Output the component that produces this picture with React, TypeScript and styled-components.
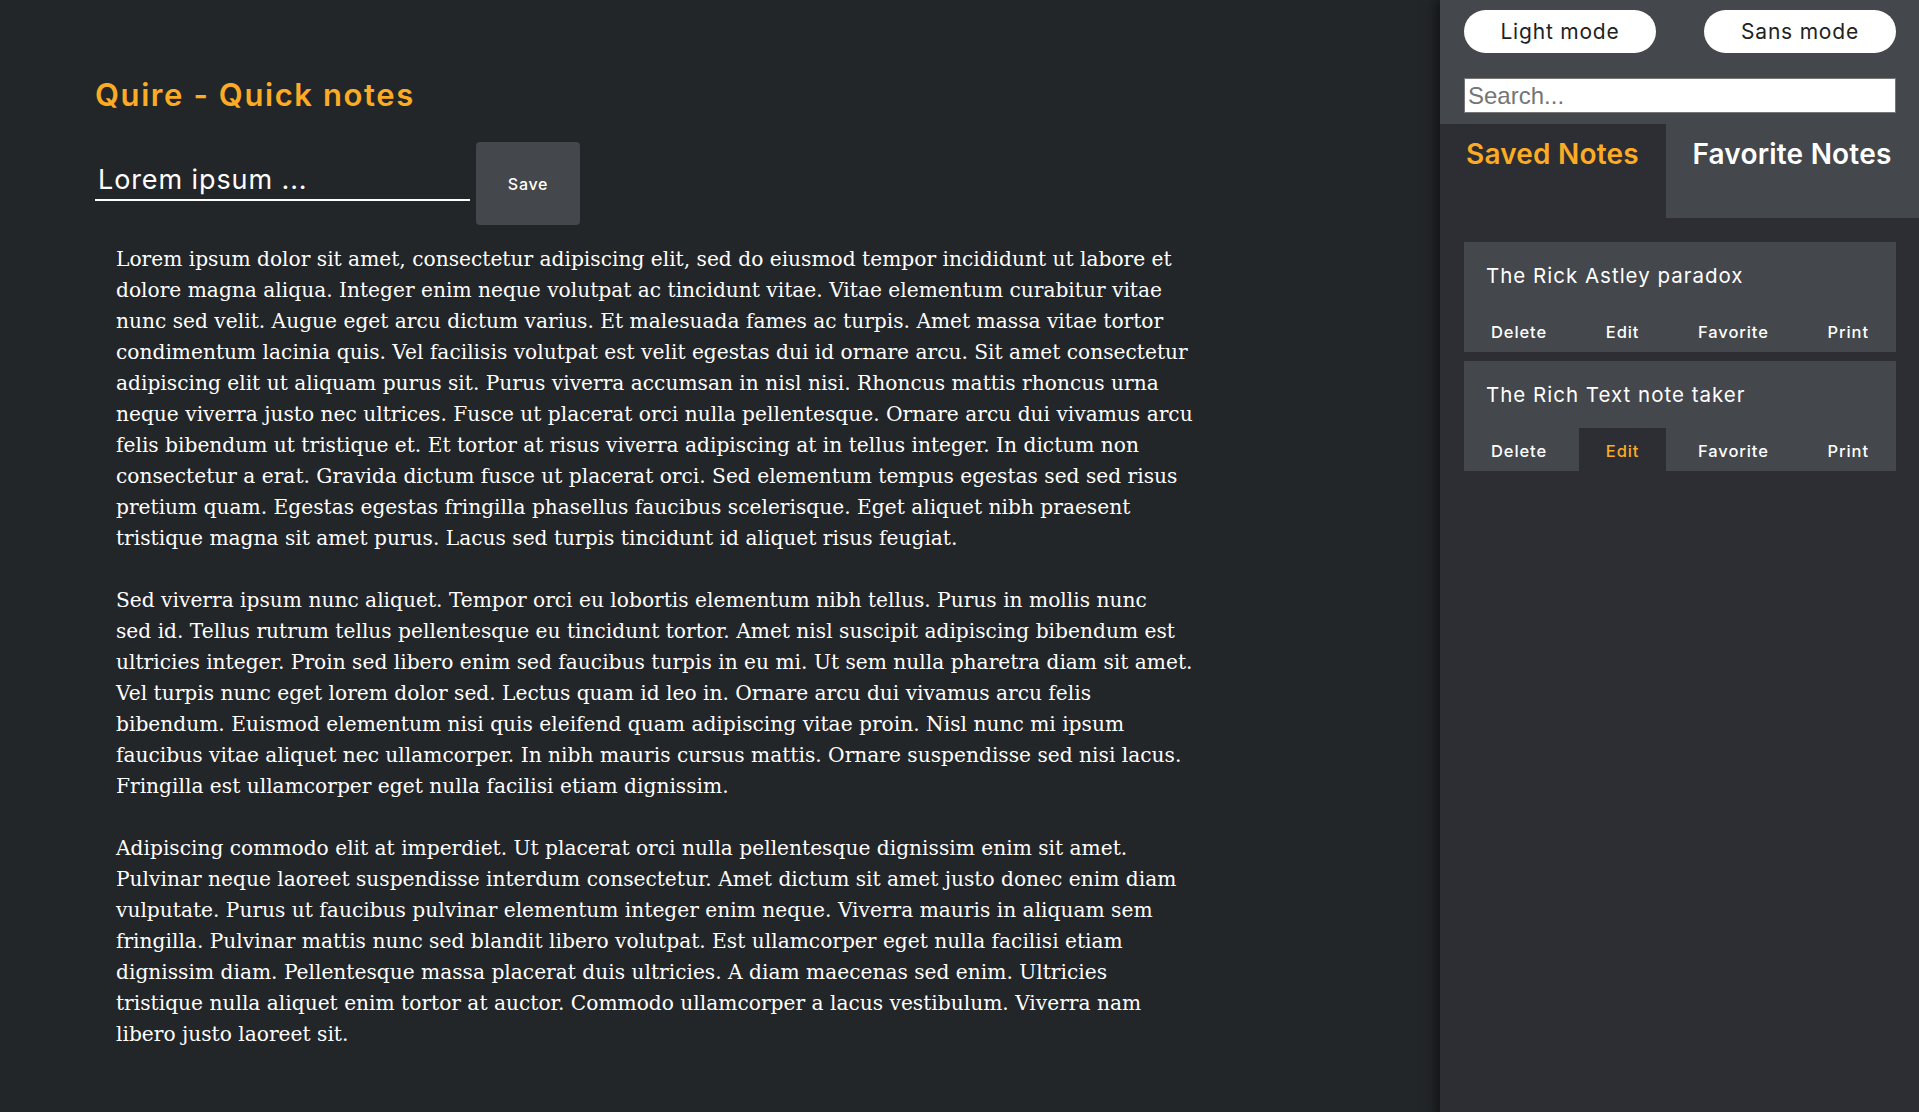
import React from "react";
import styled, { createGlobalStyle } from "styled-components";

const GlobalStyle = createGlobalStyle`
  html, body { margin: 0; padding: 0; background: #232629; }
  body { font-family: Inter, "Open Sans", sans-serif; }
  * { box-sizing: border-box; }
`;

const ORANGE = "#fbab24";
const LIGHT = "#44474c";
const DARK = "#2c2e33";

const Page = styled.div`
  display: flex;
  min-height: 1112px;
  background: #232629;
`;

const Main = styled.main`
  flex: 1;
  padding: 75px 0 40px 95px;
  color: #fff;
`;

const Title = styled.h1`
  margin: 0;
  font-family: Inter, sans-serif;
  font-weight: 600;
  font-size: 31px;
  letter-spacing: 1.6px;
  line-height: 40px;
  color: ${ORANGE};
`;

const Composer = styled.form`
  display: flex;
  align-items: flex-start;
  margin-top: 27px;
`;

const TitleInput = styled.input`
  width: 375px;
  height: 41px;
  margin-top: 18px;
  padding: 0 3px;
  background: transparent;
  border: none;
  border-bottom: 2px solid #fff;
  color: #fff;
  font-family: Inter, sans-serif;
  font-size: 27px;
  letter-spacing: 0.9px;
  outline: none;
  &::placeholder { color: #fff; }
`;

const SaveButton = styled.button`
  margin-left: 6px;
  width: 104px;
  height: 83px;
  border: none;
  border-radius: 4px;
  background: ${LIGHT};
  color: #fff;
  font-family: Inter, sans-serif;
  font-size: 16px;
  letter-spacing: 0.7px;
  font-weight: 500;
`;

const Body = styled.article`
  margin-top: 19px;
  padding-left: 21px;
  font-family: "DejaVu Serif", serif;
  font-size: 20.2px;
  line-height: 31px;
  color: #fff;
`;

const Para = styled.p`
  margin: 0 0 31px;
  white-space: pre;
`;

const Sidebar = styled.aside`
  width: 479px;
  flex: none;
  background: ${DARK};
  box-shadow: -4px 0 12px rgba(0, 0, 0, 0.55);
  position: relative;
  z-index: 1;
`;

const Header = styled.div`
  background: ${LIGHT};
  padding-top: 10px;
`;

const Controls = styled.div`
  padding: 0 23px 0 24px;
`;

const ModeRow = styled.div`
  display: flex;
  justify-content: space-between;
`;

const ModeButton = styled.button`
  width: 192px;
  height: 43px;
  border: none;
  border-radius: 22px;
  background: #fff;
  color: #222;
  font-family: Inter, sans-serif;
  font-size: 21px;
  letter-spacing: 0.8px;
`;

const Search = styled.input`
  display: block;
  margin-top: 25px;
  width: 100%;
  height: 35px;
  padding: 0 3px;
  border: 1px solid #767676;
  background: #fff;
  font-family: "Liberation Sans", Arial, sans-serif;
  font-size: 24px;
  outline: none;
  &::placeholder { color: #757575; }
`;

const TabBar = styled.div`
  display: flex;
  margin-top: 11px;
  height: 94px;
`;

const Tab = styled.button<{ $active?: boolean }>`
  flex: 1 1 auto;
  padding: 12px 26px 0;
  border: none;
  text-align: left;
  align-self: stretch;
  display: flex;
  align-items: flex-start;
  background: ${(p) => (p.$active ? DARK : "transparent")};
  color: ${(p) => (p.$active ? ORANGE : "#fff")};
  font-family: Inter, sans-serif;
  font-weight: 600;
  font-size: 28px;
  letter-spacing: 0.2px;
  line-height: 36px;
  white-space: nowrap;
`;

const NoteList = styled.div`
  display: flex;
  flex-direction: column;
  gap: 9px;
  padding: 24px 23px 0 24px;
`;

const Card = styled.div`
  height: 110px;
  display: flex;
  flex-direction: column;
  background: ${LIGHT};
`;

const CardTitle = styled.div`
  padding: 22px 22px 0;
  font-family: Inter, sans-serif;
  font-size: 20.5px;
  line-height: 24px;
  color: #fff;
  letter-spacing: 1px;
`;

const Actions = styled.div`
  margin-top: auto;
  display: flex;
  justify-content: space-between;
  height: 43px;
`;

const Action = styled.button<{ $active?: boolean }>`
  padding: 2px 27px 0;
  border: none;
  background: ${(p) => (p.$active ? DARK : "transparent")};
  color: ${(p) => (p.$active ? ORANGE : "#fff")};
  font-family: Inter, sans-serif;
  font-size: 16.5px;
  letter-spacing: 0.9px;
  font-weight: 500;
`;

const paragraphs = [
  [
    "Lorem ipsum dolor sit amet, consectetur adipiscing elit, sed do eiusmod tempor incididunt ut labore et",
    "dolore magna aliqua. Integer enim neque volutpat ac tincidunt vitae. Vitae elementum curabitur vitae",
    "nunc sed velit. Augue eget arcu dictum varius. Et malesuada fames ac turpis. Amet massa vitae tortor",
    "condimentum lacinia quis. Vel facilisis volutpat est velit egestas dui id ornare arcu. Sit amet consectetur",
    "adipiscing elit ut aliquam purus sit. Purus viverra accumsan in nisl nisi. Rhoncus mattis rhoncus urna",
    "neque viverra justo nec ultrices. Fusce ut placerat orci nulla pellentesque. Ornare arcu dui vivamus arcu",
    "felis bibendum ut tristique et. Et tortor at risus viverra adipiscing at in tellus integer. In dictum non",
    "consectetur a erat. Gravida dictum fusce ut placerat orci. Sed elementum tempus egestas sed sed risus",
    "pretium quam. Egestas egestas fringilla phasellus faucibus scelerisque. Eget aliquet nibh praesent",
    "tristique magna sit amet purus. Lacus sed turpis tincidunt id aliquet risus feugiat.",
  ],
  [
    "Sed viverra ipsum nunc aliquet. Tempor orci eu lobortis elementum nibh tellus. Purus in mollis nunc",
    "sed id. Tellus rutrum tellus pellentesque eu tincidunt tortor. Amet nisl suscipit adipiscing bibendum est",
    "ultricies integer. Proin sed libero enim sed faucibus turpis in eu mi. Ut sem nulla pharetra diam sit amet.",
    "Vel turpis nunc eget lorem dolor sed. Lectus quam id leo in. Ornare arcu dui vivamus arcu felis",
    "bibendum. Euismod elementum nisi quis eleifend quam adipiscing vitae proin. Nisl nunc mi ipsum",
    "faucibus vitae aliquet nec ullamcorper. In nibh mauris cursus mattis. Ornare suspendisse sed nisi lacus.",
    "Fringilla est ullamcorper eget nulla facilisi etiam dignissim.",
  ],
  [
    "Adipiscing commodo elit at imperdiet. Ut placerat orci nulla pellentesque dignissim enim sit amet.",
    "Pulvinar neque laoreet suspendisse interdum consectetur. Amet dictum sit amet justo donec enim diam",
    "vulputate. Purus ut faucibus pulvinar elementum integer enim neque. Viverra mauris in aliquam sem",
    "fringilla. Pulvinar mattis nunc sed blandit libero volutpat. Est ullamcorper eget nulla facilisi etiam",
    "dignissim diam. Pellentesque massa placerat duis ultricies. A diam maecenas sed enim. Ultricies",
    "tristique nulla aliquet enim tortor at auctor. Commodo ullamcorper a lacus vestibulum. Viverra nam",
    "libero justo laoreet sit.",
  ],
];

const notes = [
  { title: "The Rick Astley paradox", active: "" },
  { title: "The Rich Text note taker", active: "Edit" },
];

export default function App() {
  return (
    <>
      <GlobalStyle />
      <Page>
        <Main>
          <Title>Quire - Quick notes</Title>
          <Composer onSubmit={(e) => e.preventDefault()}>
            <TitleInput defaultValue="Lorem ipsum ..." />
            <SaveButton type="submit">Save</SaveButton>
          </Composer>
          <Body>
            {paragraphs.map((lines, i) => (
              <Para key={i}>{lines.join("\n")}</Para>
            ))}
          </Body>
        </Main>
        <Sidebar>
          <Header>
            <Controls>
              <ModeRow>
                <ModeButton>Light mode</ModeButton>
                <ModeButton>Sans mode</ModeButton>
              </ModeRow>
              <Search placeholder="Search..." />
            </Controls>
            <TabBar>
              <Tab $active>Saved Notes</Tab>
              <Tab>Favorite Notes</Tab>
            </TabBar>
          </Header>
          <NoteList>
            {notes.map((n) => (
              <Card key={n.title}>
                <CardTitle>{n.title}</CardTitle>
                <Actions>
                  {["Delete", "Edit", "Favorite", "Print"].map((a) => (
                    <Action key={a} $active={n.active === a}>
                      {a}
                    </Action>
                  ))}
                </Actions>
              </Card>
            ))}
          </NoteList>
        </Sidebar>
      </Page>
    </>
  );
}
